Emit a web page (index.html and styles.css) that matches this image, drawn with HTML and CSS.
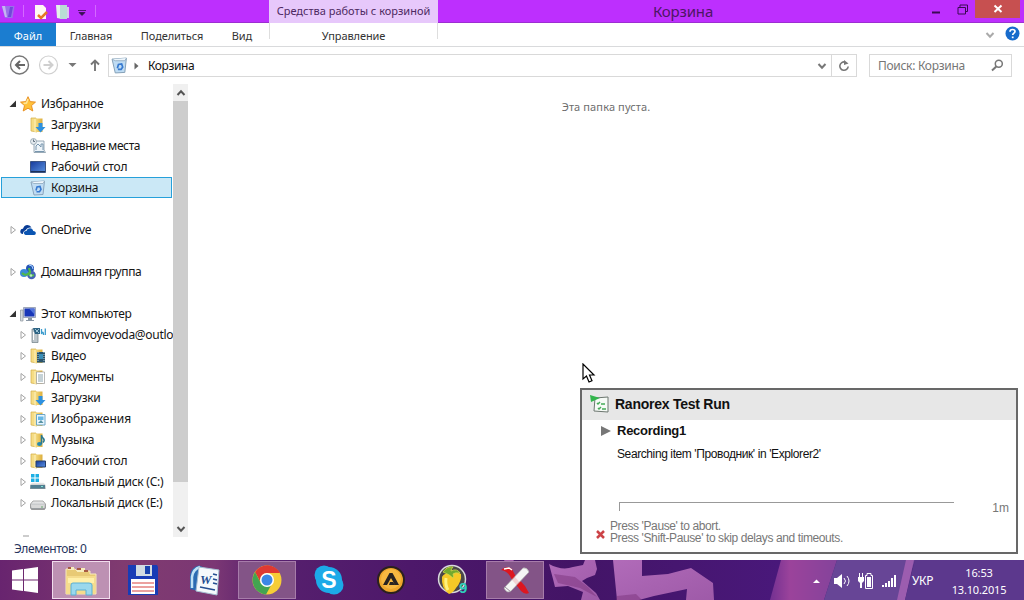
FILE: index.html
```
<!DOCTYPE html>
<html lang="ru">
<head>
<meta charset="utf-8">
<title>Корзина</title>
<link rel="stylesheet" href="styles.css">
</head>
<body>
<svg class="defs" aria-hidden="true">
  <defs>
    <linearGradient id="gold" x1="0" x2="1"><stop offset="0" stop-color="#f7df85"/><stop offset="1" stop-color="#dcae3c"/></linearGradient>
    <linearGradient id="screen" x1="0" y1="0" x2="1" y2="1"><stop offset="0" stop-color="#163a9c"/><stop offset="1" stop-color="#5a92e0"/></linearGradient>
    <linearGradient id="metal" x1="0" y1="0" x2="0" y2="1"><stop offset="0" stop-color="#f4f4f4"/><stop offset="1" stop-color="#8d9296"/></linearGradient>
    <symbol id="folder" viewBox="0 0 16 16"><path d="M1 1h5l1 14-6-1z" fill="#f5dc85" stroke="#d3ac45" stroke-width=".7"/><path d="M5 1.500h7.500v13.500H5z" fill="url(#gold)"/><path d="M5 2v13" stroke="#fff6cf" stroke-width=".8"/></symbol>
    <symbol id="bin" viewBox="0 0 16 16"><path d="M1 2 14.500 1 13 14.500 4 15z" fill="#bfdcf3" stroke="#829db5" stroke-width=".9"/><path d="M1 2 4 3.500h9L14.500 1" fill="#eef6fc" stroke="#8ea8bd" stroke-width=".8"/><path d="M6 10.500 7 7l3-.5 1 3-1.500 2.200H6.500" fill="none" stroke="#3679d0" stroke-width="1.600"/></symbol>
    <symbol id="closed" viewBox="0 0 8 10"><path d="M2 1.500v7L6.500 5z" fill="#fff" stroke="#a3a3a3"/></symbol>
    <symbol id="open" viewBox="0 0 8 10"><path d="M7 1.500V8H.5z" fill="#333"/></symbol>
    <symbol id="chev" viewBox="0 0 10 8"><path d="m1.500 2 3.500 3.700L8.500 2" fill="none" stroke="currentColor" stroke-width="2"/></symbol>
  </defs>
</svg>
<div class="window">
  <header class="titlebar">
    <div class="quick">
      <svg width="100" height="23"><path d="M1.500 6h13l-2 12H5z" fill="#9a70ea"/><path d="M2 6h3l2 11H5z" fill="#c7b5f2"/><path d="M10 7h3l-2 10H8z" fill="#7148d9"/><path d="M23.500 5v12M95.500 5v12" stroke="#d469ff"/><path d="M35 5h8l3 3v11H35z" fill="#fff8f2"/><path d="m38 15 3 3 6-6" fill="none" stroke="#e67827" stroke-width="2.500"/><path d="M56 5h6v14l-5-1z" fill="#e3f1e8"/><path d="M60 5h7v14h-7z" fill="#b9dcd5"/><path d="M67 7h2v11h-2z" fill="#ddc3f4"/><path d="M78 10.500h8M79 12.500h6l-3 3z" fill="#391052" stroke="#391052" stroke-width=".8"/></svg>
    </div>
    <div class="context">Средства работы с корзиной</div>
    <div class="caption">Корзина</div>
    <div class="controls">
      <svg width="47" height="23"><path d="M4 12.500h8" stroke="#3a0b53" stroke-width="2"/><path d="M30 7.500h7.500v6.500H30zM32 7.500v-2.500h7.500v6.500H38" fill="none" stroke="#3a0b53"/></svg>
      <div class="close"><svg width="10" height="10"><path d="m1.500 1.500 7 6.500m0-6.500-7 6.500" stroke="#fff" stroke-width="2"/></svg></div>
    </div>
  </header>
  <nav class="ribbon">
    <div class="file">Файл</div>
    <div class="tab t-home">Главная</div>
    <div class="tab t-share">Поделиться</div>
    <div class="tab t-view">Вид</div>
    <div class="tab t-manage">Управление</div>
    <div class="help">
      <svg class="pale" width="10" height="8"><use href="#chev"/></svg>
      <svg width="15" height="15" viewBox="0 0 15 15"><circle cx="7.500" cy="7.500" r="7" fill="#176bcb"/><path d="M5 5.700Q5 3.500 7.500 3.500T10 5.500q0 1-1.300 1.900-1 .7-1 1.600" fill="none" stroke="#fff" stroke-width="1.700"/><path d="M6.800 10.500h1.800v1.700H6.800z" fill="#fff"/></svg>
    </div>
  </nav>
  <div class="address-row">
    <svg class="navs" width="108" height="36" viewBox="0 0 108 36">
      <g fill="none"><circle cx="19.500" cy="18" r="9" stroke="#777" stroke-width="1.400"/><path d="M25 18h-9m4-4-4 4 4 4" stroke="#666" stroke-width="2"/><circle cx="48.500" cy="18" r="9" stroke="#d0d0d0" stroke-width="1.200"/><path d="M43.500 18h9m-4-4 4 4-4 4" stroke="#cfcfcf" stroke-width="2"/><path d="M95 24V13m-4 4.500 4-4 4 4" stroke="#777" stroke-width="1.900"/></g><path d="M68.500 16h8l-4 4z" fill="#777"/>
    </svg>
    <div class="address">
      <svg width="17" height="17"><use href="#bin"/></svg>
      <svg class="crumb" width="5" height="8"><path d="M.5.5v7L4.500 4z" fill="#666"/></svg>
      <span class="path">Корзина</span>
      <svg class="dim" width="10" height="8"><use href="#chev"/></svg>
      <div class="refresh"><svg width="12" height="12" viewBox="0 0 12 12"><path d="M7 2A4.200 4.200 0 1 0 10.200 6.500" fill="none" stroke="#777" stroke-width="1.600"/><path d="M6 0v5l4.500-1.500z" fill="#777"/></svg></div>
    </div>
    <div class="search"><span>Поиск: Корзина</span><svg width="13" height="13" viewBox="0 0 13 13"><circle cx="7.800" cy="4.800" r="3.500" fill="none" stroke="#777" stroke-width="1.500"/><path d="M5.300 7.500 1 11.500" stroke="#777" stroke-width="2"/></svg></div>
  </div>
  <main class="content">
    <aside class="tree">
      <div class="row"><svg class="arrow"><use href="#open"/></svg><svg class="ico" viewBox="0 0 16 16"><path d="m8 .7 2.200 4.900 5.300.5-4 3.500 1.300 5.400L8 12.200 3.200 15l1.300-5.400-4-3.500 5.300-.5z" fill="#ffc13a" stroke="#e78a1c" stroke-width=".9"/><path d="m8 3-1.500 4-3 .5" fill="none" stroke="#ffe69a" stroke-width="1.500"/></svg><span>Избранное</span></div>
      <div class="row sub"><svg class="ico" viewBox="0 0 16 16"><use href="#folder"/><path d="M8.500 6h4v4h3L10.500 15.500 5.500 10h3z" fill="#2e91e0"/></svg><span>Загрузки</span></div>
      <div class="row sub"><svg class="ico" viewBox="0 0 16 16"><path d="M4 3h10v9l1.500 2.500H4z" fill="#edf4f9" stroke="#8296a5" stroke-width=".8"/><path d="M6 12V8l2-2 3 3V6h2v6M5 13.500h9" fill="none" stroke="#7896ae"/><circle cx="3.500" cy="3.500" r="3" fill="#e3e9ee" stroke="#8296a5" stroke-width=".7"/><path d="M3.500 1.500v2H5" fill="none" stroke="#456" stroke-width=".8"/></svg><span class="tight">Недавние места</span></div>
      <div class="row sub"><svg class="ico" viewBox="0 0 16 16"><path d="M.5 2.500h15v11H.5z" fill="url(#screen)" stroke="#3c5483"/><path d="M1 12.500h14" stroke="#1c3158"/></svg><span class="loose">Рабочий стол</span></div>
      <div class="row sub selected"><svg class="ico"><use href="#bin"/></svg><span>Корзина</span></div>
      <div class="row"></div>
      <div class="row"><svg class="arrow"><use href="#closed"/></svg><svg class="ico" viewBox="0 0 16 16"><path d="M3 12Q0 12 .3 9 .7 6.600 3 6.800 4 3 7.500 3q2.800 0 4 2.500Q7 5 6 8q-3 1-3 4z" fill="#083c95"/><path d="M5.500 13Q3.500 12.500 4 10.300 4.600 8.800 6.500 9 7.300 6.200 10 6.200t3.200 2.900q2.700.2 2.600 2.300-.2 1.600-2 1.600z" fill="#0b55b2"/></svg><span class="tight">OneDrive</span></div>
      <div class="row"></div>
      <div class="row"><svg class="arrow"><use href="#closed"/></svg><svg class="ico" viewBox="0 0 16 16"><circle cx="10" cy="4.500" r="4" fill="#2455b5"/><circle cx="4" cy="9" r="4" fill="#3b8bd9"/><circle cx="11.500" cy="11" r="4.300" fill="#4562b8"/><path d="M2 9q4 4 8-1L9 4m1 4q-2 5 4 3" fill="none" stroke="#50b94a" stroke-width="2.200"/><path d="M9 1q4 0 4 4" fill="none" stroke="#a8d3ff"/><circle cx="11" cy="11.500" r="1.300" fill="#b9edc0"/></svg><span class="tight">Домашняя группа</span></div>
      <div class="row"></div>
      <div class="row"><svg class="arrow"><use href="#open"/></svg><svg class="ico" viewBox="0 0 16 16"><path d="M.5 4H3v11H.5z" fill="#d4d9dd" stroke="#8c969d" stroke-width=".7"/><path d="M3.500 1.500h12v10h-12z" fill="#d7dce6" stroke="#7c88a0" stroke-width=".7"/><path d="M4.500 2.500h10v8h-10z" fill="#1937b8"/><path d="M9 2.500h5.500v6z" fill="#5275db"/><path d="M8 12h4v2h2v1H6v-1h2z" fill="#8996a5"/></svg><span>Этот компьютер</span></div>
      <div class="row leaf"><svg class="arrow"><use href="#closed"/></svg><svg class="ico" viewBox="0 0 16 16"><path d="M2 2h6v13.500H2z" fill="#bdc6cb" stroke="#6f7d84" stroke-width=".7"/><path d="M3.500 5v8" stroke="#fff"/><path d="M3 1h7v6H5z" fill="#2e6484"/><path d="m5 2 4 4m0-4L6 5" stroke="#b7dcea" stroke-width=".8"/><path d="M11.500 2v5q2-4 2 1M15.300 1.500V8" fill="none" stroke="#3a9bcd" stroke-width="1.300"/></svg><span class="mail">vadimvoyevoda@outlook.com</span></div>
      <div class="row leaf"><svg class="arrow"><use href="#closed"/></svg><svg class="ico" viewBox="0 0 16 16"><use href="#folder"/><path d="M7 4h8v10.500H7z" fill="#2a536b"/><path d="M8 4v10M14 4v10" stroke="#b7d4de" stroke-dasharray="1 1"/><path d="M9 6h4v5H9z" fill="#3a8fb9"/></svg><span>Видео</span></div>
      <div class="row leaf"><svg class="arrow"><use href="#closed"/></svg><svg class="ico" viewBox="0 0 16 16"><use href="#folder"/><path d="M6.500 3h8v11.500h-8z" fill="#fff" stroke="#999" stroke-width=".7"/><path d="M8 6h5M8 8h5m-5 2h5m-5 2h5" stroke="#8ba4ae"/></svg><span class="tight">Документы</span></div>
      <div class="row leaf"><svg class="arrow"><use href="#closed"/></svg><svg class="ico" viewBox="0 0 16 16"><use href="#folder"/><path d="M8.500 6h4v4h3L10.500 15.500 5.500 10h3z" fill="#2e91e0"/></svg><span>Загрузки</span></div>
      <div class="row leaf"><svg class="arrow"><use href="#closed"/></svg><svg class="ico" viewBox="0 0 16 16"><use href="#folder"/><path d="M6.500 3.500h8.500v10.500H6.500z" fill="#e7f6ff" stroke="#6ca6c7"/><path d="M8 5.500h5.500V9H8z" fill="#65b7e5"/><path d="m8 12 3-3 2.500 3z" fill="#5894a6"/></svg><span class="natural">Изображения</span></div>
      <div class="row leaf"><svg class="arrow"><use href="#closed"/></svg><svg class="ico" viewBox="0 0 16 16"><use href="#folder"/><ellipse cx="9.500" cy="12" rx="2.500" ry="2" fill="#2389b2"/><path d="M11.500 12V3q0 2 2 3.500 1.500 2-.5 4" fill="none" stroke="#287891" stroke-width="1.500"/></svg><span>Музыка</span></div>
      <div class="row leaf"><svg class="arrow"><use href="#closed"/></svg><svg class="ico" viewBox="0 0 16 16"><use href="#folder"/><path d="M6 8h9.500v6H6z" fill="url(#screen)" stroke="#273f6b"/></svg><span class="loose">Рабочий стол</span></div>
      <div class="row leaf"><svg class="arrow"><use href="#closed"/></svg><svg class="ico" viewBox="0 0 16 16"><path d="M1 0h3.500v3.500H1zm4.500 0H9v3.500H5.500zM1 4.500h3.500V8H1zm4.500 0H9V8H5.500z" fill="#1dafe4"/><path d="m2 8.500-2 2.500v4h15.500v-4l-2-2.500z" fill="url(#metal)"/><path d="M.5 11h14.500v3.500H.5z" fill="#527e91"/><path d="M11 12.500h2" stroke="#7de4d8"/></svg><span>Локальный диск (C:)</span></div>
      <div class="row leaf"><svg class="arrow"><use href="#closed"/></svg><svg class="ico" viewBox="0 0 16 16"><path d="M3 6h10l2.500 3v4l-1 1.500H1.500L.5 13V9z" fill="url(#metal)" stroke="#858585" stroke-width=".7"/><path d="M1 10h13.500v3H1.500z" fill="#d9d9d9"/><path d="M11 12h2" stroke="#65a66d"/></svg><span>Локальный диск (E:)</span></div>
      <div class="peek"></div>
    </aside>
    <div class="scroll">
      <svg class="up" width="10" height="8"><use href="#chev"/></svg>
      <div class="thumb"></div>
      <svg width="10" height="8"><use href="#chev"/></svg>
    </div>
    <section class="files">Эта папка пуста.</section>
  </main>
  <footer class="status">Элементов: 0</footer>
  <div class="taskbar">
    <svg class="wall" width="1024" height="40" viewBox="0 0 1024 40">
      <defs><linearGradient id="wg"><stop offset="0" stop-color="#68246f"/><stop offset=".12" stop-color="#803b70"/><stop offset=".21" stop-color="#7b3774"/><stop offset=".26" stop-color="#57206e"/><stop offset=".4" stop-color="#4d186a"/><stop offset=".56" stop-color="#431466"/><stop offset=".76" stop-color="#49187a"/><stop offset="1" stop-color="#633986"/></linearGradient><linearGradient id="ray"><stop offset="0" stop-color="#733091"/><stop offset=".3" stop-color="#9b439b"/><stop offset="1" stop-color="#84439b"/></linearGradient><linearGradient id="pap" x2="1" y2="1"><stop offset="0" stop-color="#b16bb9"/><stop offset="1" stop-color="#9e5aa8"/></linearGradient></defs>
      <path d="M0 0h1024v40H0z" fill="url(#wg)"/>
      <path d="M504 0h10l-6 8z" fill="#a560ae"/>
      <path d="M549 4q13 7 24 3l10-2 2-5h10l2 9-2 6-8 3-5 3 14 12 4 7h-19l2-8-15-6-13 1-2-8z" fill="url(#pap)"/><path d="m554 14 21 3 13 10 9 10-17-9-22-5z" fill="#7b347b" opacity=".5"/>
      <path d="M613 0h29v16l26-2 23-6 22 15 1 17h-28l1-11-33 7-15 4h-22z" fill="url(#pap)"/><path d="m617 36 19-2 6 6h-26z" fill="#7b347b" opacity=".5"/>
      <path d="M781 0h56l-13 40h-54z" fill="url(#ray)"/><path d="M837 0h78l-13 40h-78z" fill="#674596"/><path d="M906 0h8l-9 40h-8z" fill="#9c5daf"/><path d="M915 0h109v40H905z" fill="#5c388d"/>
    </svg>
    <div class="apps">
      <div class="start"><svg width="26" height="26" viewBox="0 0 26 26"><path d="M0 3.500 11 2v10.500H0zM12 2l14-2v12.500H12zM0 13.500h11V24L0 22.500zm12 0h14V26l-14-2z" fill="#fff"/></svg></div>
      <div class="app active"><svg viewBox="0 0 32 32"><path d="M1 5h9l2 2h13v3h6v20H1z" fill="#e8ca75" stroke="#f8eabc"/><path d="M3 3h6v3H3zm9 1h8v4h-8z" fill="#f7edbc"/><path d="M3 4h3m6 1h4m3 2h4" stroke="#a65a43" stroke-width="2"/><path d="M1 12h29v18H1z" fill="#f5dc8d"/><path d="M3 14h26v5H3z" fill="#fff0aa"/><path d="M6 31V21q0-2 2-2h16q3 0 3 2v10h-6v-5H11v5z" fill="#9ad8ed" stroke="#5ab0d4"/></svg></div>
      <div class="app"><svg viewBox="0 0 32 32"><path d="M1 1h29l1 2v28H1z" fill="#183cb6"/><path d="M9 1h16v11H9z" fill="#d1dbe2"/><path d="M18 2h5v8h-5z" fill="#1943ae"/><path d="M4 15h24v15H4z" fill="#fff"/><path d="M5 19h22M5 23h22M5 27h22" stroke="#d84441" stroke-width="1.200"/></svg></div>
      <div class="app"><svg viewBox="0 0 32 32"><path d="M1 11q1-8 9-9.500l5 2v25L1 25z" fill="#2b6bb2"/><path d="M3 24V13q1-8 8-10" fill="none" stroke="#bfe1f5" stroke-width="2.500"/><path d="m10 3 20 3-2 25-21-4z" fill="#f5f9fc" stroke="#a6bed2"/><text x="11" y="20" class="word">W</text><path d="m24 10 4 1m-4 4 4 1m-4 3 4 1M11 23l15 3" stroke="#244e91" stroke-width="1.700"/></svg></div>
      <div class="app running"><svg viewBox="0 0 32 32"><circle cx="16" cy="16" r="14.500" fill="#f6cd37"/><path d="M4 8A14.500 14.500 0 0 1 29 9H16a7 7 0 0 0-6 10z" fill="#df3932"/><path d="M4 8a14.500 14.500 0 0 0 11 22.500l6-11a7 7 0 0 1-11 0z" fill="#43a451"/><circle cx="16" cy="16" r="7" fill="#fff"/><circle cx="16" cy="16" r="5.500" fill="#3c87e5"/></svg></div>
      <div class="app"><svg viewBox="0 0 32 32"><circle cx="11" cy="11" r="9.500" fill="#1caae8"/><circle cx="21" cy="21" r="9.500" fill="#1caae8"/><circle cx="16" cy="16" r="13" fill="#1caae8"/><text x="16" y="24" text-anchor="middle" class="skype">S</text></svg></div>
      <div class="app"><svg viewBox="0 0 32 32"><circle cx="16" cy="16" r="13" fill="#eea62c" stroke="#2b211e" stroke-width="2"/><circle cx="16" cy="15" r="10" fill="#f7b841"/><path d="m8 21 6.500-12h3L24 21h-4l-4-7-4 7zM15 18h3l2 3h-6z" fill="#282321"/></svg></div>
      <div class="app"><svg viewBox="0 0 32 32"><circle cx="15" cy="15" r="13.500" fill="#4b4848" stroke="#d8d8dd" stroke-width="1.500"/><path d="M5 13q2-4 8-4 7-2 11 1 1 7-5 14-3 5-7 6-8-6-7-17z" fill="#f6c927"/><path d="M9 14q-1 7 2 12" fill="none" stroke="#fff17d" stroke-width="3"/><path d="M6 8q4-6 10-5-2 2-2 4 6-3 9 2-5-1-7 1 1 2 0 4-4-4-10-6z" fill="#74a92e" stroke="#d0d94a" stroke-width=".8"/><text x="22" y="29" class="nine">9</text></svg></div>
      <div class="app running"><svg viewBox="0 0 32 32"><path d="M2 6q5-5 11-1l3 6 10 11 4 7q-4 2-8-2L12 14Q9 7 2 6z" fill="#dc1720"/><path d="m5 5 5-1 3 2" stroke="#fff" stroke-width="1.500" fill="none"/><path d="m5 24 19-20q4-1 6 4L12 27q-4 3-7-3z" fill="#f5f5f5" stroke="#aaa" stroke-width=".7"/><path d="m6 23 6 5" stroke="#9a8d9d"/><path d="m13 11 3 2 8 9-3 3-8-9z" fill="#dc1720" opacity=".15"/></svg></div>
    </div>
    <div class="tray">
      <svg width="110" height="40"><path d="m3 23 3.500-3.500L10 23z" fill="#fff"/><path d="M24 18h3l5-4v14l-5-4h-3z" fill="#fff"/><path d="M34 18q3 3 0 6m3-8q4 5 0 10" fill="none" stroke="#fff"/><path d="M49 13h1v4h2v-4h1v4h1v4l-2 2v5h-2v-5l-2-2v-4h1z" fill="#fff"/><path d="M57 17h4v10h-4z" fill="#fff"/><path d="M55.500 15.500H57v-2h4v2h1.500v13h-7z" fill="none" stroke="#fff"/><path d="M72 25h2v2h-2zm3-2h2v4h-2zm3-2h2v6h-2zm3-3h2v9h-2zm3-3h2v12h-2z" fill="#fff"/></svg>
      <span class="lang">УКР</span>
      <div class="clock"><span>16:53</span><span>13.10.2015</span></div>
    </div>
  </div>
  <div class="popup">
    <div class="popup-head"><svg width="20" height="20" viewBox="0 0 20 20"><path d="m5 4 13-1v15L4 17z" fill="#f6faf6" stroke="#6d7770"/><path d="m0 1 10 3-9 4z" fill="#32b54c"/><path d="m7 9 1 1 2-2m1 2h4m-7 4 1 1 2-2m1 2h4" fill="none" stroke="#44aa57" stroke-width="1.500"/></svg><span>Ranorex Test Run</span></div>
    <div class="recording"><svg width="10" height="10"><path d="M0 0v10l10-5z" fill="#777"/></svg><span>Recording1</span></div>
    <div class="message">Searching item 'Проводник' in 'Explorer2'</div>
    <div class="progress"><div class="bar"></div><span>1m</span></div>
    <div class="hint"><svg width="9" height="9"><path d="m1 1 7 7m0-7-7 7" stroke="#cc4347" stroke-width="2.500"/></svg><div><p>Press 'Pause' to abort.</p><p>Press 'Shift-Pause' to skip delays and timeouts.</p></div></div>
  </div>
  <svg class="cursor" width="14" height="21" viewBox="0 0 14 21"><path d="M1 1v15l3.500-3 2.500 6 3-1.300-2.500-5.700H12z" fill="#fff" stroke="#000" stroke-width="1.200"/></svg>
</div>
</body>
</html>
```
FILE: styles.css
```
* { box-sizing: border-box; }
body { margin: 0; font: 12px/21px "Noto Sans", "Open Sans", sans-serif; color: #202020; overflow: hidden; }
svg { display: block; flex: none; }
p { margin: 0; }
.defs { position: absolute; width: 0; height: 0; }
.window { position: relative; width: 1024px; height: 600px; display: flex; flex-direction: column; background: #fff; }
.titlebar { height: 23px; display: flex; background: #bd2ffe; border-bottom: 1px solid #9c2fd1; }
.quick { width: 269px; }
.context { width: 169px; height: 23px; background: #e7c8fb; text-align: center; color: #4d2861; white-space: nowrap; font-size: 11px; }
.caption { width: 490px; text-align: center; font-size: 15px; line-height: 23px; letter-spacing: -.15px; color: #4c1664; }
.controls { display: flex; }
.close { width: 45px; height: 18px; display: flex; align-items: center; justify-content: center; background: #c75050; }
.ribbon { height: 24px; display: flex; border-bottom: 1px solid #d9dadc; font-size: 11px; line-height: 25px; white-space: nowrap; }
.file { width: 56px; height: 23px; text-align: center; background: #1b7dd0; color: #fff; }
.tab { text-align: center; color: #333; letter-spacing: -.1px; }
.t-home { width: 70px; }
.t-share { width: 92px; }
.t-view { width: 48px; margin-right: 3px; }
.t-manage { width: 169px; height: 16px; border: solid #dedede; border-width: 0 1px; }
.help { margin-left: auto; padding: 3px 4px 0 0; display: flex; gap: 10px; }
.pale { color: #aaa; margin-top: 5px; }
.address-row { height: 37px; display: flex; }
.address { width: 749px; height: 23px; margin-top: 7px; padding-left: 2px; border: 1px solid #d9d9d9; display: flex; align-items: center; color: #111; }
.crumb { margin-left: 6px; }
.path { margin: 0 auto 0 9px; letter-spacing: -.4px; }
.dim { color: #777; }
.refresh { width: 25px; height: 21px; margin-left: 4px; border-left: 1px solid #d9d9d9; display: flex; align-items: center; justify-content: center; }
.search { width: 143px; height: 23px; margin: 7px 0 0 12px; padding: 0 7px 0 8px; border: 1px solid #d9d9d9; display: flex; align-items: center; justify-content: space-between; color: #767676; letter-spacing: -.3px; }
.content { height: 453px; display: flex; }
.tree { width: 173px; padding-top: 9px; overflow: hidden; }
.row { height: 21px; padding-left: 9px; display: flex; align-items: center; white-space: nowrap; color: #151515; width: 173px; overflow: hidden; letter-spacing: -.25px; }
.row span { margin-left: 5px; }
.tight { letter-spacing: -.4px; }
.loose { letter-spacing: -.18px; }
.natural { letter-spacing: 0; }
.mail { letter-spacing: -.3px; }
.arrow { width: 8px; height: 10px; margin-right: 3px; }
.ico { width: 16px; height: 16px; }
.sub { padding-left: 30px; }
.leaf { padding-left: 19px; }
.selected { margin-left: 1px; width: 171px; padding-left: 28px; border: 1px solid #26a0da; background: #cbe8f6; }
.peek { margin: 22px 0 0 23px; width: 6px; height: 2px; background: #ccc; }
.scroll { width: 15px; background: #f0f0f0; display: flex; flex-direction: column; align-items: center; color: #555; }
.up { transform: rotate(180deg); margin: 5px 0 4px; }
.thumb { width: 15px; height: 381px; margin-bottom: 43px; background: #cdcdcd; }
.files { flex: 1; padding-top: 12px; text-align: center; color: #6d6d6d; font-size: 11px; letter-spacing: .12px; }
.status { height: 23px; padding-left: 14px; line-height: 24px; color: #26345d; letter-spacing: -.38px; }
.taskbar { position: relative; height: 40px; display: flex; justify-content: space-between; }
.wall { position: absolute; inset: 0; }
.apps, .tray { position: relative; display: flex; }
.apps { gap: 4px; }
.start { width: 48px; padding: 7px 0 0 12px; }
.app { width: 58px; height: 38px; margin-top: 1px; display: flex; align-items: center; justify-content: center; border: 1px solid transparent; }
.app svg { width: 32px; height: 32px; overflow: visible; }
.active { background: #bd91b3; border-color: #f1dced; }
.running { background: #835487; border-color: #a77caa; }
.word { font: italic bold 13px "Liberation Serif", serif; fill: #244e91; }
.skype { font: bold 23px "Liberation Sans", sans-serif; fill: #fff; }
.nine { font: bold 15px "Liberation Sans", sans-serif; fill: #2ed1bc; }
.tray { width: 214px; color: #fff; }
.lang { width: 26px; margin-left: -8px; line-height: 41px; white-space: nowrap; letter-spacing: -.3px; }
.clock { width: 84px; margin-left: -1px; padding-top: 4px; display: flex; flex-direction: column; text-align: center; font-size: 11px; line-height: 17px; letter-spacing: -.15px; }
.popup { position: absolute; left: 580px; top: 388px; width: 438px; height: 166px; border: 2px solid #686868; background: #fff; font-family: "Liberation Sans", sans-serif; color: #111; }
.popup-head { height: 30px; padding: 0 0 2px 8px; display: flex; align-items: center; gap: 5px; background: #e7e7e7; font-size: 14px; font-weight: bold; letter-spacing: -.25px; }
.recording { height: 21px; padding-left: 19px; display: flex; align-items: center; gap: 6px; font-size: 13px; font-weight: bold; letter-spacing: -.25px; }
.message { height: 27px; padding: 3px 0 0 35px; letter-spacing: -.4px; white-space: nowrap; }
.progress { height: 52px; padding: 34px 7px 0 37px; display: flex; justify-content: space-between; color: #777; line-height: 12px; }
.bar { width: 335px; height: 9px; border-top: 1px solid #999; border-left: 1px solid #999; }
.hint { padding-left: 14px; display: flex; align-items: center; gap: 5px; line-height: 12px; color: #777; white-space: nowrap; letter-spacing: -.4px; }
.hint svg { margin-top: 4px; }
.cursor { position: absolute; left: 582px; top: 363px; }
```
